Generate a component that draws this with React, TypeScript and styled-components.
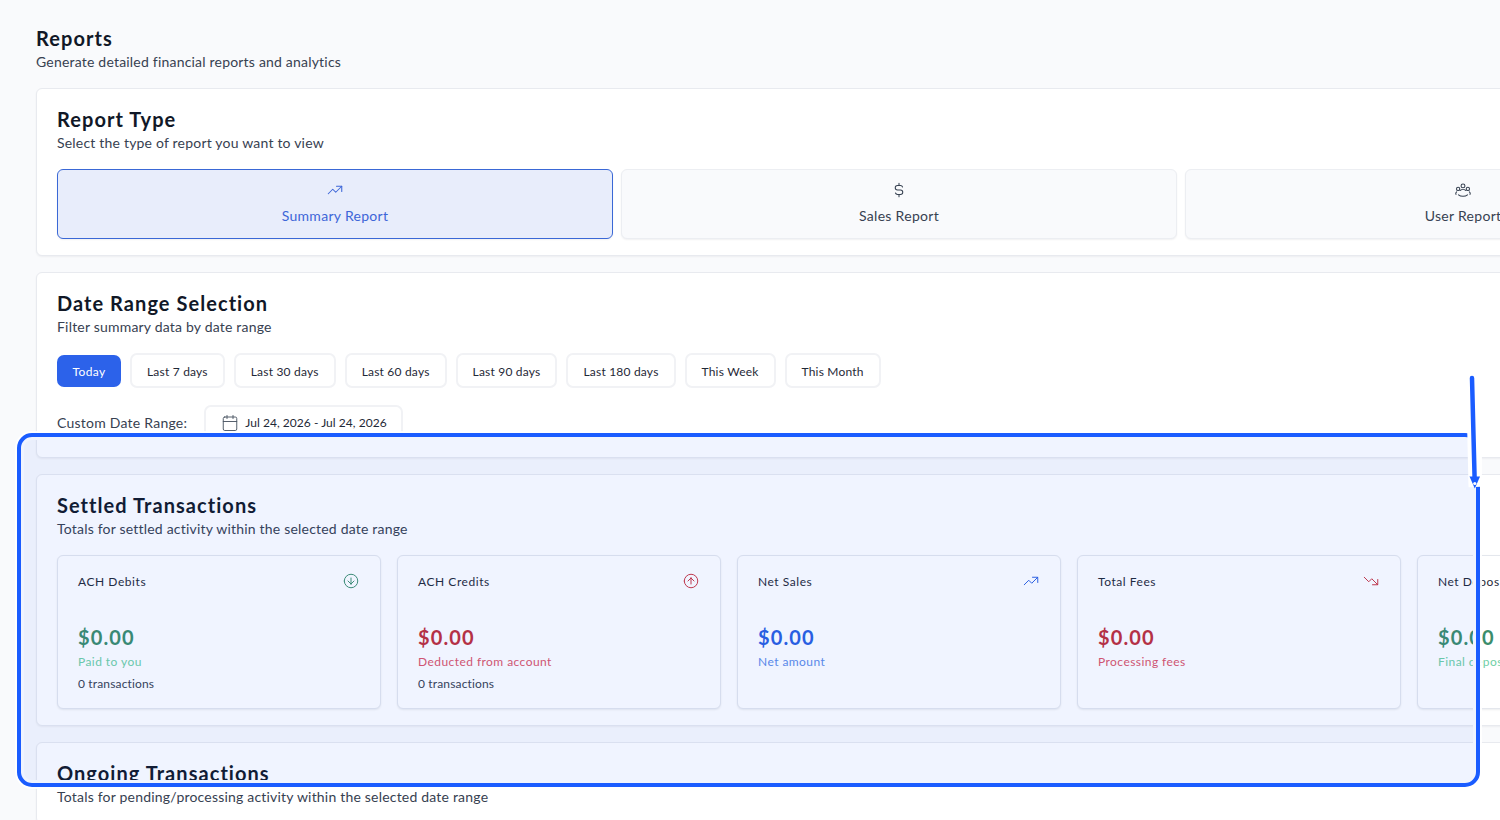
import React from 'react';
import styled, { createGlobalStyle } from 'styled-components';
import { Calendar } from 'lucide-react';
import {
  TbCircleArrowDown,
  TbCircleArrowUp,
  TbCurrencyDollar,
  TbTrendingDown,
  TbTrendingUp,
} from 'react-icons/tb';

type Tone = 'green' | 'red' | 'blue';

interface StatData {
  title: string;
  value: string;
  note: string;
  tone: Tone;
  icon: React.ReactNode;
  count?: string;
}

const toneColors: Record<Tone, { value: string; note: string; icon: string }> = {
  green: { value: '#3b8d6c', note: '#6fcfa6', icon: '#3b8d6c' },
  red: { value: '#bf2f39', note: '#dc5569', icon: '#c8323f' },
  blue: { value: '#2a5fe0', note: '#5d8ce8', icon: '#2a5fe0' },
};

const ranges = [
  'Last 7 days',
  'Last 30 days',
  'Last 60 days',
  'Last 90 days',
  'Last 180 days',
  'This Week',
  'This Month',
];

const stats: StatData[] = [
  {
    title: 'ACH Debits',
    value: '$0.00',
    note: 'Paid to you',
    tone: 'green',
    icon: <TbCircleArrowDown />,
    count: '0 transactions',
  },
  {
    title: 'ACH Credits',
    value: '$0.00',
    note: 'Deducted from account',
    tone: 'red',
    icon: <TbCircleArrowUp />,
    count: '0 transactions',
  },
  { title: 'Net Sales', value: '$0.00', note: 'Net amount', tone: 'blue', icon: <TbTrendingUp /> },
  { title: 'Total Fees', value: '$0.00', note: 'Processing fees', tone: 'red', icon: <TbTrendingDown /> },
  { title: 'Net Deposits', value: '$0.00', note: 'Final deposits', tone: 'green', icon: <TbTrendingUp /> },
];

const GlobalStyle = createGlobalStyle`
  html, body {
    margin: 0;
    padding: 0;
    background: #f9fafc;
  }

  body {
    font-family: Lato, "Noto Sans", sans-serif;
    color: #111827;
  }
`;

const Viewport = styled.div`
  position: relative;
  width: 1500px;
  height: 820px;
  overflow: hidden;
`;

const Page = styled.main`
  width: 1726px;
  padding: 28px 0 0 36px;
  display: flex;
  flex-direction: column;
  gap: 16px;
`;

const Header = styled.header`
  display: flex;
  flex-direction: column;
  gap: 4px;
`;

const PageTitle = styled.h1`
  margin: 0;
  font-size: 20px;
  line-height: 20px;
  font-weight: 700;
  letter-spacing: 1.05px;
`;

const Subtitle = styled.p`
  margin: 0;
  font-size: 14px;
  line-height: 20px;
  letter-spacing: 0.2px;
  color: #374151;
`;

const Card = styled.section`
  box-sizing: border-box;
  padding: 20px 20px 16px;
  background: #fff;
  border: 1px solid #e8eaef;
  border-radius: 6px;
  box-shadow: 0 1px 2px rgba(17, 24, 39, 0.05);
`;

const CardTitle = styled.h2`
  margin: 0 0 4px;
  font-size: 20px;
  line-height: 20px;
  font-weight: 700;
  letter-spacing: 1.05px;
`;

const TypeGrid = styled.div`
  margin-top: 16px;
  display: grid;
  grid-template-columns: repeat(3, 556px);
  gap: 8px;
`;

const TypeButton = styled.div<{ $active?: boolean }>`
  box-sizing: border-box;
  height: 70px;
  display: flex;
  flex-direction: column;
  align-items: center;
  padding-top: 11px;
  gap: 7px;
  font-size: 14px;
  line-height: 20px;
  letter-spacing: 0.3px;
  border-radius: 6px;
  border: 1px solid ${(p) => (p.$active ? '#3a68d6' : '#eceef2')};
  background: ${(p) => (p.$active ? '#e8edfb' : '#f9fafc')};
  color: ${(p) => (p.$active ? '#3d66d8' : '#374151')};
  box-shadow: 0 1px 2px rgba(17, 24, 39, 0.06);

  svg {
    font-size: 18px;
    display: block;
    stroke-width: 1.4;
  }
`;

const UsersIcon = styled.svg`
  width: 18px;
  height: 18px;
  fill: none;
  stroke: currentColor;
  stroke-linecap: round;
`;

const RangeRow = styled.div`
  margin-top: 16px;
  display: flex;
  align-items: center;
  gap: 9px;
`;

const RangeButton = styled.div`
  box-sizing: border-box;
  height: 35px;
  padding: 1px 15px 0;
  display: flex;
  align-items: center;
  font-size: 12px;
  letter-spacing: 0.2px;
  color: #1f2937;
  background: #fff;
  border: 2px solid #f1f2f5;
  border-radius: 7px;
`;

const ActiveRange = styled.div`
  box-sizing: border-box;
  width: 64px;
  height: 32px;
  padding-top: 2px;
  display: flex;
  align-items: center;
  justify-content: center;
  font-size: 12px;
  letter-spacing: 0.36px;
  color: #fff;
  background: #2c62ea;
  border-radius: 7px;
`;

const CustomRow = styled.div`
  margin: 17px 0 1px;
  display: flex;
  align-items: center;
  gap: 17px;
`;

const CustomLabel = styled.span`
  font-size: 14px;
  letter-spacing: 0.24px;
  color: #374151;
`;

const DatePicker = styled(RangeButton)`
  width: 199px;
  padding: 0 0 0 15px;
  gap: 6px;
  letter-spacing: 0.04px;

  svg {
    color: #4b5563;
    flex: none;
  }
`;

const StatGrid = styled.div`
  margin-top: 16px;
  display: grid;
  grid-template-columns: repeat(5, 324px);
  gap: 16px;
`;

const StatCard = styled.article`
  box-sizing: border-box;
  height: 154px;
  padding: 17px 20px 16px;
  background: #fff;
  border: 1px solid #e4e7ed;
  border-radius: 6px;
  box-shadow: 0 1px 2px rgba(17, 24, 39, 0.08);
`;

const StatHead = styled.div`
  display: flex;
  align-items: center;
  justify-content: space-between;
  height: 16px;
`;

const StatTitle = styled.span`
  font-size: 12px;
  letter-spacing: 0.55px;
  color: #1f2937;
`;

const StatIcon = styled.span<{ $tone: Tone }>`
  display: flex;
  font-size: 18px;
  color: ${(p) => toneColors[p.$tone].icon};

  svg {
    stroke-width: 1.3;
  }
`;

const StatValue = styled.div<{ $tone: Tone }>`
  margin-top: 36px;
  font-size: 20px;
  line-height: 24px;
  font-weight: 700;
  letter-spacing: 1.1px;
  color: ${(p) => toneColors[p.$tone].value};
`;

const StatNote = styled.div<{ $tone: Tone }>`
  margin-top: 5px;
  font-size: 12px;
  line-height: 16px;
  letter-spacing: 0.44px;
  color: ${(p) => toneColors[p.$tone].note};
`;

const StatCount = styled.div`
  margin-top: 6px;
  font-size: 12px;
  line-height: 16px;
  letter-spacing: 0.15px;
  color: #374151;
`;

// highlight rectangle and arrow sit on top of the page, like an annotation
const Highlight = styled.div`
  position: absolute;
  left: 17px;
  top: 433px;
  width: 1463px;
  height: 354px;
  box-sizing: border-box;
  border: 4px solid #1a5cff;
  border-radius: 15px;
  background: rgba(30, 90, 255, 0.065);
  box-shadow: 0 0 0 2px rgba(255, 255, 255, 0.9), inset 0 0 0 3px #f0f4fe;
`;

const Arrow = styled.svg`
  position: absolute;
  left: 1460px;
  top: 370px;
  width: 30px;
  height: 125px;
`;

const App: React.FC = () => {
  return (
    <Viewport>
      <GlobalStyle />
      <Page>
        <Header>
          <PageTitle>Reports</PageTitle>
          <Subtitle>Generate detailed financial reports and analytics</Subtitle>
        </Header>

        <Card>
          <CardTitle>Report Type</CardTitle>
          <Subtitle>Select the type of report you want to view</Subtitle>
          <TypeGrid>
            <TypeButton $active>
              <TbTrendingUp />
              Summary Report
            </TypeButton>
            <TypeButton>
              <TbCurrencyDollar />
              Sales Report
            </TypeButton>
            <TypeButton>
              <UsersIcon viewBox="0 0 24 24">
                <circle cx="12" cy="6.5" r="2.6" />
                <circle cx="5.5" cy="10.5" r="2.2" />
                <circle cx="18.5" cy="10.5" r="2.2" />
                <path d="M8.5 12.5c1.8-1.6 5.2-1.6 7 0" />
                <path d="M3.5 14.5c-1.2 1-1.5 2.4-.8 3.4M20.5 14.5c1.2 1 1.5 2.4.8 3.4" />
                <path d="M6 18.5c3 2.6 9 2.6 12 0" />
              </UsersIcon>
              User Report
            </TypeButton>
          </TypeGrid>
        </Card>

        <Card>
          <CardTitle>Date Range Selection</CardTitle>
          <Subtitle>Filter summary data by date range</Subtitle>
          <RangeRow>
            <ActiveRange>Today</ActiveRange>
            {ranges.map((range) => (
              <RangeButton key={range}>{range}</RangeButton>
            ))}
          </RangeRow>
          <CustomRow>
            <CustomLabel>Custom Date Range:</CustomLabel>
            <DatePicker>
              <Calendar size={18} strokeWidth={1.25} />
              Jul 24, 2026 - Jul 24, 2026
            </DatePicker>
          </CustomRow>
        </Card>

        <Card>
          <CardTitle>Settled Transactions</CardTitle>
          <Subtitle>Totals for settled activity within the selected date range</Subtitle>
          <StatGrid>
            {stats.map((stat) => (
              <StatCard key={stat.title}>
                <StatHead>
                  <StatTitle>{stat.title}</StatTitle>
                  <StatIcon $tone={stat.tone}>{stat.icon}</StatIcon>
                </StatHead>
                <StatValue $tone={stat.tone}>{stat.value}</StatValue>
                <StatNote $tone={stat.tone}>{stat.note}</StatNote>
                {stat.count && <StatCount>{stat.count}</StatCount>}
              </StatCard>
            ))}
          </StatGrid>
        </Card>

        <Card>
          <CardTitle>Ongoing Transactions</CardTitle>
          <Subtitle>Totals for pending/processing activity within the selected date range</Subtitle>
        </Card>
      </Page>

      <Highlight />
      <Arrow viewBox="0 0 30 125">
        <path d="M12.5 6 L15 117" stroke="#fff" strokeWidth="13" fill="none" />
        <path d="M12 8 L14.6 108" stroke="#1a5cff" strokeWidth="4.5" strokeLinecap="round" fill="none" />
        <path d="M9.5 106.5 L20 106.5 L14.8 118.5 Z" fill="#1a5cff" />
        <circle cx="14.8" cy="113.5" r="1.6" fill="#fff" />
      </Arrow>
    </Viewport>
  );
};

export default App;
